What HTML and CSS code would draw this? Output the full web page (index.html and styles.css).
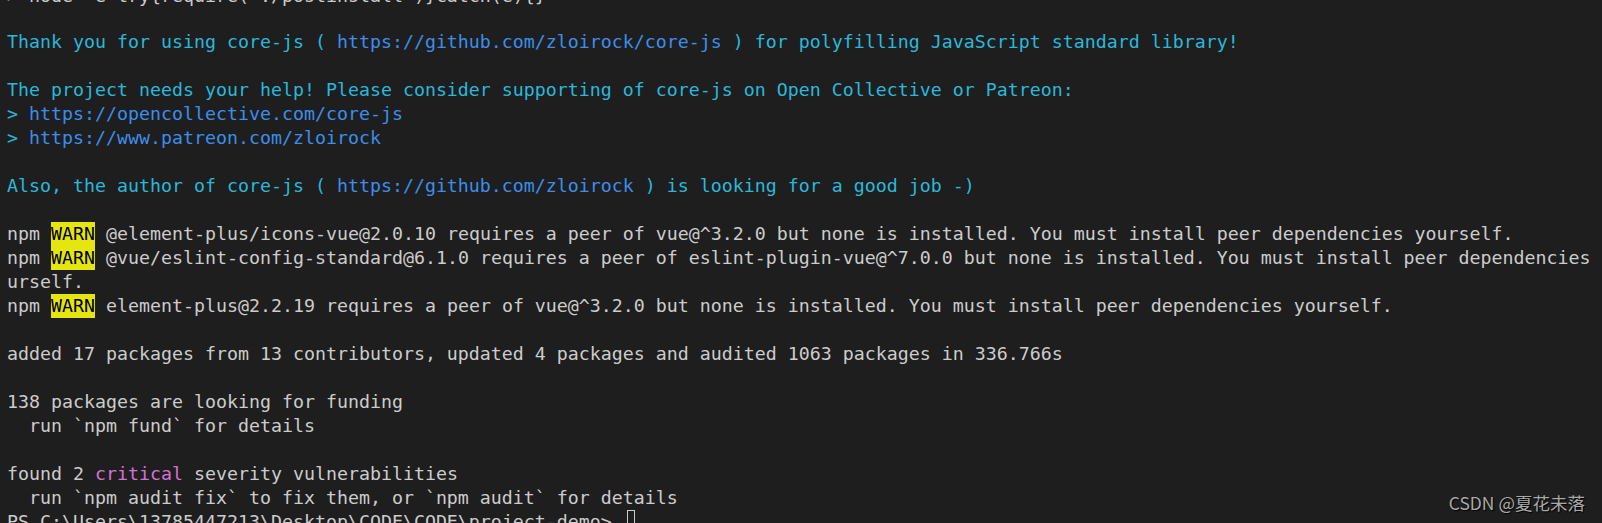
FILE: index.html
```html
<!DOCTYPE html>
<html lang="en">
<head>
  <meta charset="UTF-8">
  <meta name="viewport" content="width=device-width, initial-scale=1.0">
  <title>Terminal</title>
  <link rel="stylesheet" href="styles.css">
</head>
<body>

  <div class="terminal">
<pre class="output"><span class="scrolled">&gt; node -e try{require('./postinstall')}catch(e){}</span>
<span class="cyan">Thank you for using core-js ( </span><span class="blue">https://github.com/zloirock/core-js</span><span class="cyan"> ) for polyfilling JavaScript standard library!</span>

<span class="cyan">The project needs your help! Please consider supporting of core-js on Open Collective or Patreon:</span>
<span class="cyan">&gt; </span><span class="blue">https://opencollective.com/core-js</span>
<span class="cyan">&gt; </span><span class="blue">https://www.patreon.com/zloirock</span>

<span class="cyan">Also, the author of core-js ( </span><span class="blue">https://github.com/zloirock</span><span class="cyan"> ) is looking for a good job -)</span>

npm <span class="warn">WARN</span> @element-plus/icons-vue@2.0.10 requires a peer of vue@^3.2.0 but none is installed. You must install peer dependencies yourself.
npm <span class="warn">WARN</span> @vue/eslint-config-standard@6.1.0 requires a peer of eslint-plugin-vue@^7.0.0 but none is installed. You must install peer dependencies yo
urself.
npm <span class="warn">WARN</span> element-plus@2.2.19 requires a peer of vue@^3.2.0 but none is installed. You must install peer dependencies yourself.

added 17 packages from 13 contributors, updated 4 packages and audited 1063 packages in 336.766s

138 packages are looking for funding
  run `npm fund` for details

found 2 <span class="magenta">critical</span> severity vulnerabilities
  run `npm audit fix` to fix them, or `npm audit` for details
PS C:\Users\13785447213\Desktop\CODE\CODE\project-demo&gt; <span class="cursor"></span></pre>
  </div>

  <div class="watermark">CSDN @夏花未落</div>

</body>
</html>
```

FILE: styles.css
```css
html, body {
  margin: 0;
  height: 100%;
  overflow: hidden;
  background-color: #1e1e1e;
}

.terminal {
  margin-top: -16px;
  padding-left: 7px;
}

.output {
  margin: 0;
  font-family: "DejaVu Sans Mono", "Liberation Mono", monospace;
  font-size: 18.27px;
  line-height: 24px;
  color: #cccccc;
  white-space: pre;
}

/* last line of the scrollback, only its lower part shows */
.output .scrolled {
  display: block;
  height: 22px;
}

.cyan {
  color: #29b8db;
}

.blue {
  color: #3b8eea;
}

.magenta {
  color: #d670d6;
}

.warn {
  display: inline-block;
  height: 24px;
  vertical-align: top;
  background-color: #e5e510;
  color: #000;
}

.cursor {
  display: inline-block;
  width: 8px;
  height: 22px;
  margin-left: 4px;
  vertical-align: top;
  border: 1px solid #cccccc;
  box-sizing: border-box;
}

.watermark {
  position: absolute;
  right: 17px;
  bottom: 8px;
  font-family: "Noto Sans CJK SC", "Noto Sans", sans-serif;
  font-size: 17.5px;
  color: #a9a9a9;
  text-shadow: 1px 1px 1px #000;
}
```
